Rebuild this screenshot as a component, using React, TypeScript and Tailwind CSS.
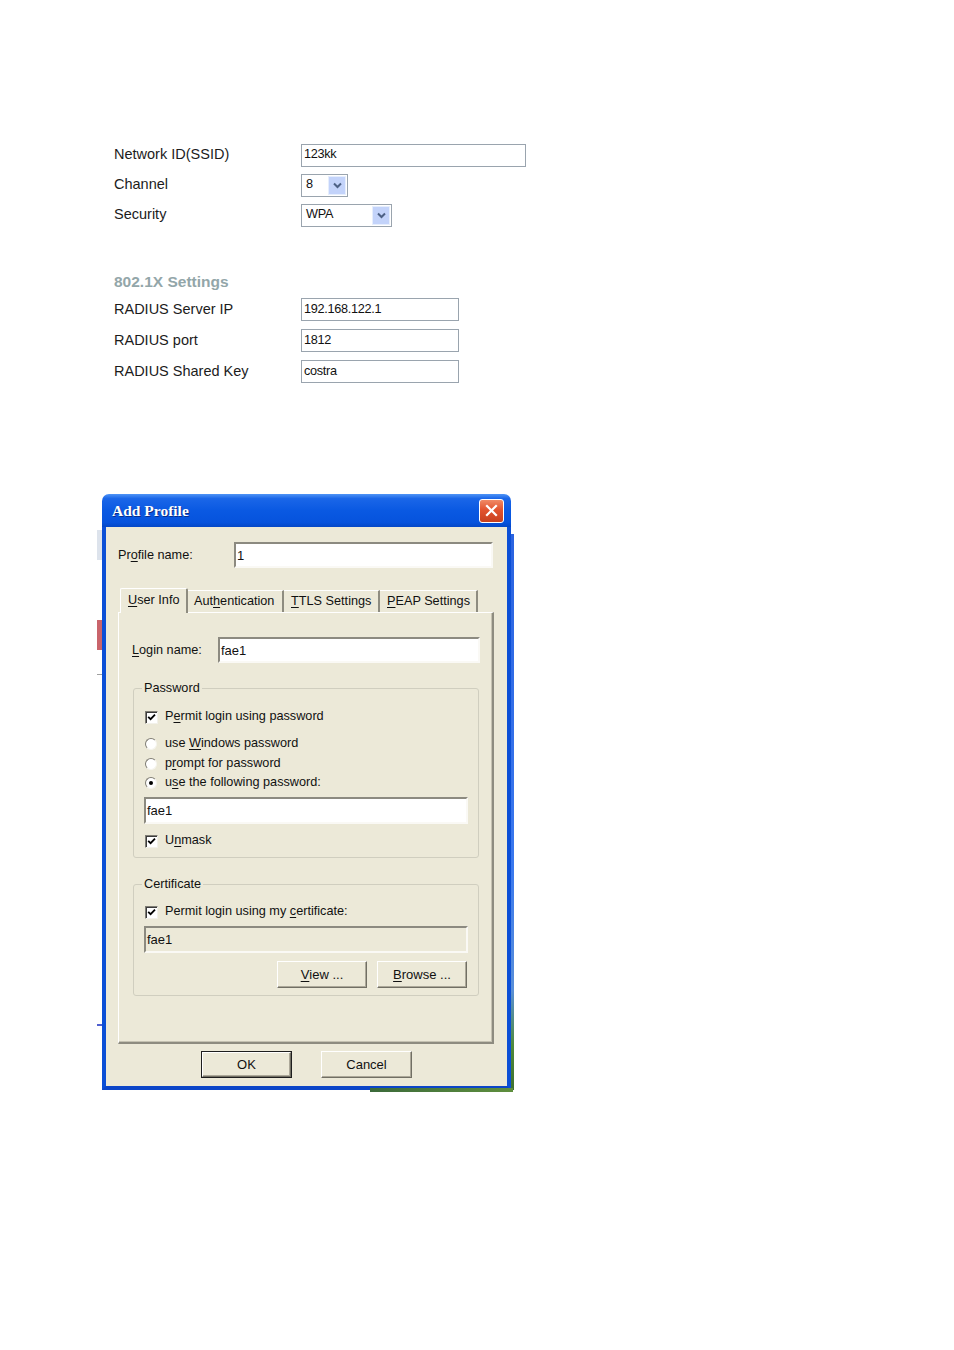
import React from 'react';

// Classic XP-style controls
const U = ({ children }: { children: React.ReactNode }) => <span className="underline underline-offset-[2px]">{children}</span>;

const CheckBox = ({ checked }: { checked?: boolean }) => (
    <span className="w-[13px] h-[13px] shrink-0 bg-white border border-t-[#7F7D74] border-l-[#7F7D74] border-b-[#F2F1EA] border-r-[#F2F1EA] shadow-[inset_1px_1px_0_#3C3C3C] flex items-center justify-center">
        {checked && (
            <svg width="9" height="9" viewBox="0 0 9 9">
                <path d="M1.2 3.8 L3.6 6.2 L8 1.6" fill="none" stroke="#000" strokeWidth="1.8" />
            </svg>
        )}
    </span>
);

const Radio = ({ checked }: { checked?: boolean }) => (
    <span className="w-[12px] h-[12px] shrink-0 rounded-full bg-white border border-t-[#7F7D74] border-l-[#7F7D74] border-b-[#F5F4EE] border-r-[#F5F4EE] flex items-center justify-center">
        {checked && <span className="w-[4px] h-[4px] rounded-full bg-black" />}
    </span>
);

const SunkenInput = ({ value, width, disabled }: { value: string; width: string; disabled?: boolean }) => (
    <div className={`${width} h-[27px] border-2 border-t-[#8C8A80] border-l-[#8C8A80] border-b-[#FAF9F5] border-r-[#FAF9F5] ${disabled ? 'bg-[#ECE9D8]' : 'bg-white'} flex items-start pl-[1px] pt-[2px] text-[13px] text-[#111]`}>
        {value}
    </div>
);

const RaisedButton = ({ children, width, isDefault }: { children: React.ReactNode; width: string; isDefault?: boolean }) => (
    <div className={`${width} h-[27px] ${isDefault ? 'border border-[#1E1E1E]' : ''}`}>
        <div className="w-full h-full bg-[#ECE9D8] border border-t-white border-l-white border-b-[#716F64] border-r-[#716F64] shadow-[inset_-1px_-1px_0_#ACA899] flex items-center justify-center text-[13px] text-[#111]">
            {children}
        </div>
    </div>
);

const WebInput = ({ value, width }: { value: string; width: string }) => (
    <div className={`${width} h-[23px] border border-[#9AA4AE] bg-white flex items-center pl-[2px] text-[12.7px] tracking-[-0.3px] text-[#111]`}>
        {value}
    </div>
);

const WebSelect = ({ value, width }: { value: string; width: string }) => (
    <div className={`${width} h-[23px] border border-[#9AA4AE] bg-white flex items-center justify-between pl-[4px] text-[12.7px] tracking-[-0.3px] text-[#111]`}>
        <span>{value}</span>
        <span className="w-[18px] h-[19px] mr-[1px] bg-[#C3D3FA] border border-[#E6EEFD] flex items-center justify-center">
            <svg width="9" height="7" viewBox="0 0 9 7">
                <path d="M1 1.5 L4.5 5 L8 1.5" fill="none" stroke="#4D6185" strokeWidth="2" />
            </svg>
        </span>
    </div>
);

const Row = ({ label, children, h }: { label: string; children: React.ReactNode; h: string }) => (
    <div className={`flex items-center ${h}`}>
        <div className="w-[187px] text-[14.5px] text-[#1C1C1C]">{label}</div>
        {children}
    </div>
);

export default function App() {
    return (
        <div className="w-[954px] min-h-[1350px] bg-white font-['Liberation_Sans',Arial,sans-serif] pt-[140px]">
            {/* Web form */}
            <div className="pl-[114px]">
                <Row label="Network ID(SSID)" h="h-[30px]"><WebInput value="123kk" width="w-[225px]" /></Row>
                <Row label="Channel" h="h-[30px]"><WebSelect value="8" width="w-[47px]" /></Row>
                <Row label="Security" h="h-[30px]"><WebSelect value="WPA" width="w-[91px]" /></Row>

                <div className="mt-[42px] h-[20px] flex items-center text-[15.5px] font-bold text-[#93A6A9]">802.1X Settings</div>
                <div className="mt-[2px]">
                    <Row label="RADIUS Server IP" h="h-[31px]"><WebInput value="192.168.122.1" width="w-[158px]" /></Row>
                    <Row label="RADIUS port" h="h-[31px]"><WebInput value="1812" width="w-[158px]" /></Row>
                    <Row label="RADIUS Shared Key" h="h-[31px]"><WebInput value="costra" width="w-[158px]" /></Row>
                </div>
            </div>

            {/* Dialog window */}
            <div className="relative mt-[107px] ml-[102px] flex items-start">
                {/* desktop fragments peeking behind the window */}
                <div className="absolute left-[-5px] top-[36px] w-[5px] h-[30px] bg-[#DDE3EC]" />
                <div className="absolute left-[-5px] top-[126px] w-[5px] h-[30px] bg-[#C9646B]" />
                <div className="absolute left-[-5px] top-[180px] w-[5px] h-[1px] bg-[#A0A0A0]" />
                <div className="absolute left-[-5px] top-[530px] w-[5px] h-[2px] bg-[#5060D0]" />
                <div className="absolute left-[268px] top-[594px] w-[143px] h-[4px] bg-[linear-gradient(to_right,#3B6A3A,#5F8F3E)]" />

                <div className="w-[409px]">
                    {/* Title bar */}
                    <div className="h-[33px] rounded-t-[7px] bg-[linear-gradient(to_bottom,#4F94F6_0%,#1A66E8_14%,#0A59E2_50%,#0653DD_86%,#0447C6_100%)] flex items-center justify-between pl-[10px] pr-[7px]">
                        <span className="font-['Liberation_Serif',serif] font-bold text-[15.5px] text-white [text-shadow:1px_1px_0_#0A2E8A]">Add Profile</span>
                        <span className="w-[25px] h-[24px] rounded-[3px] border border-white bg-[linear-gradient(to_bottom,#F08A66,#E2532E_45%,#C7401F)] flex items-center justify-center">
                            <svg width="13" height="13" viewBox="0 0 13 13">
                                <path d="M2 2 L11 11 M11 2 L2 11" stroke="#fff" strokeWidth="2.2" strokeLinecap="square" />
                            </svg>
                        </span>
                    </div>

                    {/* Body */}
                    <div className="bg-[#ECE9D8] border-x-4 border-b-4 border-x-[#0B4FD6] border-b-[#0B45C8] pt-[15px] pl-[12px] pr-[13px] pb-[8px] text-[12.7px] text-[#111]">
                        {/* Profile name */}
                        <div className="h-[26px] flex items-center">
                            <div className="w-[116px] pt-[2px]">Pr<U>o</U>file name:</div>
                            <SunkenInput value="1" width="w-[259px] !h-[26px]" />
                        </div>

                        {/* Tabs */}
                        <div className="mt-[20px] h-[24px] flex items-end pl-[2px] relative z-10">
                            <div className="w-[68px] h-[25px] mb-[-1px] pl-[7px] bg-[#ECE9D8] border-l border-t border-l-white border-t-white border-r-2 border-r-[#8E8C80] rounded-t-[2px] flex items-center">
                                <U>U</U>ser Info
                            </div>
                            <div className="w-[96px] h-[22px] pl-[6px] border-r-2 border-r-[#8E8C80] border-t border-t-white flex items-center">
                                Aut<U>h</U>entication
                            </div>
                            <div className="w-[96px] h-[22px] pl-[7px] border-r-2 border-r-[#8E8C80] border-t border-t-white flex items-center">
                                <U>T</U>TLS Settings
                            </div>
                            <div className="w-[98px] h-[22px] pl-[7px] border-r-2 border-r-[#8E8C80] border-t border-t-white flex items-center">
                                <U>P</U>EAP Settings
                            </div>
                        </div>

                        {/* Tab panel */}
                        <div className="w-[376px] h-[432px] border border-t-white border-l-white border-r-2 border-b-2 border-r-[#8E8C80] border-b-[#8E8C80] shadow-[inset_-1px_-1px_0_#C5C2B2]">
                            {/* Login name */}
                            <div className="mt-[24px] h-[26px] flex items-center">
                                <div className="ml-[13px] w-[86px] pt-[2px]"><U>L</U>ogin name:</div>
                                <SunkenInput value="fae1" width="w-[262px] !h-[26px]" />
                            </div>

                            {/* Password group */}
                            <fieldset className="mt-[17px] ml-[14px] w-[346px] border border-[#D0CEBF] rounded-[3px] pl-[10px] pr-[10px] pb-[8px]">
                                <legend className="ml-[-2px] px-[2px] h-[16px] leading-[16px]">Password</legend>
                                <div className="mt-[13px] h-[16px] flex items-center gap-[7px] ml-[1px]">
                                    <CheckBox checked />
                                    <span>P<U>e</U>rmit login using password</span>
                                </div>
                                <div className="mt-[11px] h-[16px] flex items-center gap-[8px] ml-[1px]">
                                    <Radio />
                                    <span>use <U>W</U>indows password</span>
                                </div>
                                <div className="mt-[4px] h-[16px] flex items-center gap-[8px] ml-[1px]">
                                    <Radio />
                                    <span>p<U>r</U>ompt for password</span>
                                </div>
                                <div className="mt-[3px] h-[16px] flex items-center gap-[8px] ml-[1px]">
                                    <Radio checked />
                                    <span>u<U>s</U>e the following password:</span>
                                </div>
                                <div className="mt-[6px]">
                                    <SunkenInput value="fae1" width="w-[324px]" />
                                </div>
                                <div className="mt-[9px] h-[16px] flex items-center gap-[7px] ml-[1px]">
                                    <CheckBox checked />
                                    <span>U<U>n</U>mask</span>
                                </div>
                            </fieldset>

                            {/* Certificate group */}
                            <fieldset className="mt-[18px] ml-[14px] w-[346px] border border-[#D0CEBF] rounded-[3px] pl-[10px] pr-[10px] pb-[7px]">
                                <legend className="ml-[-2px] px-[2px] h-[16px] leading-[16px]">Certificate</legend>
                                <div className="mt-[12px] h-[16px] flex items-center gap-[7px] ml-[1px]">
                                    <CheckBox checked />
                                    <span>Permit login using my <U>c</U>ertificate:</span>
                                </div>
                                <div className="mt-[6px]">
                                    <SunkenInput value="fae1" width="w-[324px]" disabled />
                                </div>
                                <div className="mt-[8px] flex justify-end gap-[10px] pr-[1px]">
                                    <RaisedButton width="w-[90px]"><U>V</U>iew ...</RaisedButton>
                                    <RaisedButton width="w-[90px]"><U>B</U>rowse ...</RaisedButton>
                                </div>
                            </fieldset>
                        </div>

                        {/* Dialog buttons */}
                        <div className="mt-[7px] flex pl-[83px] gap-[29px]">
                            <RaisedButton width="w-[91px]" isDefault>OK</RaisedButton>
                            <RaisedButton width="w-[91px]">Cancel</RaisedButton>
                        </div>
                    </div>
                </div>

                {/* desktop strip on the right */}
                <div className="mt-[40px] w-[3px] h-[556px] bg-[linear-gradient(to_bottom,#2A63E0_0%,#3A78EE_60%,#5A8FD8_82%,#4F8A3C_92%,#3E7030_100%)]" />
            </div>
        </div>
    );
}
